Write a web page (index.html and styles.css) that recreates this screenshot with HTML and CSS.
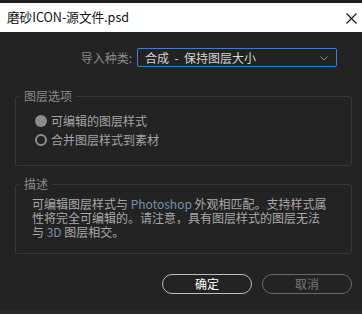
FILE: index.html
```html
<!DOCTYPE html>
<html lang="zh-CN">
<head>
<meta charset="utf-8">
<link rel="stylesheet" href="styles.css">
</head>
<body>
<div class="top-strip"></div>
<div class="titlebar">
  <span class="title">磨砂ICON-源文件.psd</span>
  <svg class="close" width="11" height="11" viewBox="0 0 11 11"><path d="M0.5 0.5 L10.5 10.5 M10.5 0.5 L0.5 10.5" stroke="#111" stroke-width="1.1" fill="none"/></svg>
</div>
<div class="content">
  <div class="import-row">
    <span class="label">导入种类:</span>
    <div class="select">
      <span>合成&nbsp;&nbsp;-&nbsp;&nbsp;保持图层大小</span>
      <svg class="chev" width="8" height="5" viewBox="0 0 8 5"><path d="M0.5 0.5 L4 4 L7.5 0.5" stroke="#8a8a8a" stroke-width="1" fill="none"/></svg>
    </div>
  </div>
  <fieldset class="group group-layers">
    <legend>图层选项</legend>
    <div class="group-body layers-body">
      <div class="radio"><span class="dot dot-on"></span><span>可编辑的图层样式</span></div>
      <div class="radio"><span class="dot dot-off"></span><span>合并图层样式到素材</span></div>
    </div>
  </fieldset>
  <fieldset class="group group-desc">
    <legend>描述</legend>
    <div class="group-body desc-body">
      <p class="desc">可编辑图层样式与 <span class="hl">Photoshop</span> 外观相匹配。支持样式属<br>性将完全可编辑的。请注意，具有图层样式的图层无法<br>与 <span class="hl">3D</span> 图层相交。</p>
    </div>
  </fieldset>
  <div class="buttons">
    <button class="btn btn-ok">确定</button>
    <button class="btn btn-cancel">取消</button>
  </div>
</div>
<div class="bottom-strip"></div>
</body>
</html>
```
FILE: styles.css
```css
html, body {
  margin: 0;
  padding: 0;
}
body {
  width: 362px;
  height: 314px;
  overflow: hidden;
  background: #232323;
  font-family: "Noto Sans CJK SC", "Noto Sans", sans-serif;
  font-size: 12px;
  display: flex;
  flex-direction: column;
}
.top-strip {
  height: 3px;
  background: #1e1e1e;
}
.titlebar {
  height: 29px;
  background: #ffffff;
  display: flex;
  align-items: center;
  justify-content: space-between;
  padding: 0 5px 0 7px;
}
.title {
  font-size: 12.6px;
  color: #111;
  line-height: 16px;
  margin-top: -1px;
}
.close {
  margin-top: 1px;
}
.content {
  flex: 1;
  padding: 16px 10px 0 15px;
  display: flex;
  flex-direction: column;
}
.import-row {
  display: flex;
  justify-content: flex-end;
  align-items: center;
  gap: 5px;
  padding-right: 15px;
  height: 19px;
}
.label {
  color: #8a8a8a;
  line-height: 16px;
}
.select {
  width: 200px;
  height: 19px;
  box-sizing: border-box;
  border: 1px solid #3b7fd1;
  border-radius: 2px;
  background: #222;
  color: #d6d6d6;
  display: flex;
  align-items: center;
  justify-content: space-between;
  padding: 0 8px 0 7px;
  line-height: 16px;
}
.chev {
  margin-top: 1px;
}
.group {
  margin: 0;
  padding: 0;
  border: 1px solid #383838;
  border-radius: 3px;
  min-width: 0;
}
.group legend {
  margin-left: 4px;
  padding: 0 4px;
  color: #8a8a8a;
  line-height: 16px;
}
.group-layers {
  margin-top: 21px;
}
.layers-body {
  padding: 7px 0 16px 19px;
}
.radio {
  display: flex;
  align-items: center;
  gap: 4px;
  height: 19px;
  color: #a3a3a3;
  line-height: 16px;
}
.dot {
  width: 12px;
  height: 12px;
  box-sizing: border-box;
  border-radius: 50%;
}
.dot-on {
  background: #8c8c8c;
}
.dot-off {
  border: 2px solid #8c8c8c;
}
.group-desc {
  margin-top: 10px;
}
.desc-body {
  padding: 5px 0 14px 16px;
}
.desc {
  margin: 0;
  color: #a8a8a8;
  line-height: 14px;
}
.hl {
  color: #7790aa;
}
.buttons {
  margin-top: 20px;
  display: flex;
  justify-content: flex-end;
  gap: 10px;
}
.btn {
  width: 90px;
  height: 20px;
  border-radius: 10px;
  background: transparent;
  font-family: inherit;
  font-size: 12px;
  line-height: 16px;
  padding: 0;
}
.btn-ok {
  border: 1px solid #bdbdbd;
  color: #ffffff;
}
.btn-cancel {
  border: 1px solid #696969;
  color: #7a7a7a;
}
.bottom-strip {
  height: 4px;
  background: #292929;
}
```
